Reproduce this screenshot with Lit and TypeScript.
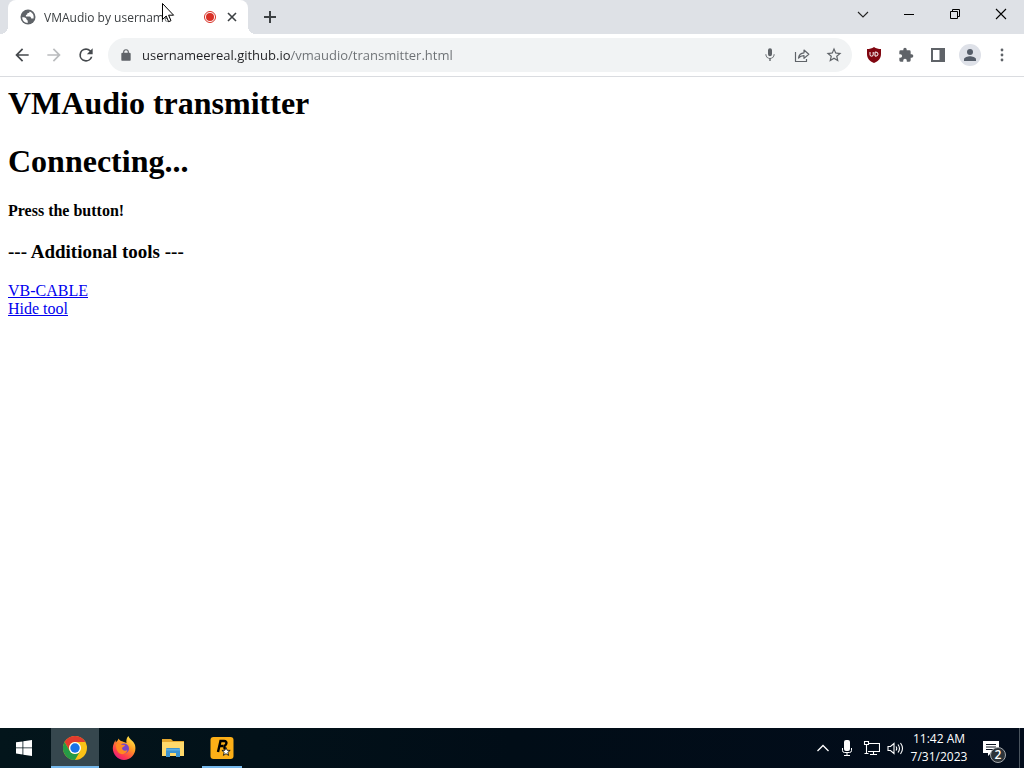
import { LitElement, html, css, svg } from "lit";
import { customElement } from "lit/decorators.js";

const icon = (body: unknown, size = 18, box = 24) =>
  html`<svg width=${size} height=${size} viewBox="0 0 ${box} ${box}" fill="currentColor" aria-hidden="true">${body}</svg>`;

const shared = css`
  * { box-sizing: border-box; }
  button {
    border: 0;
    padding: 0;
    margin: 0;
    background: none;
    color: inherit;
    font: inherit;
    display: flex;
    align-items: center;
    justify-content: center;
    flex: none;
  }
  svg { display: block; flex: none; }
`;

@customElement("tab-strip")
export class TabStrip extends LitElement {
  static styles = [shared, css`
    :host {
      display: flex;
      height: 34px;
      padding-left: 8px;
      background: #dee1e6;
      font-family: "Open Sans", "Noto Sans", sans-serif;
      font-size: 12px;
      color: #3c4043;
    }
    .tab {
      position: relative;
      display: flex;
      align-items: center;
      width: 240px;
      padding: 0 8px 0 12px;
      background: #fff;
      border-radius: 8px 8px 0 0;
    }
    .tab::before, .tab::after {
      content: "";
      position: absolute;
      bottom: 0;
      width: 8px;
      height: 8px;
    }
    .tab::before { right: 100%; background: radial-gradient(circle at 0 0, transparent 8px, #fff 8px); }
    .tab::after { left: 100%; background: radial-gradient(circle at 100% 0, transparent 8px, #fff 8px); }
    .title {
      flex: 1;
      min-width: 0;
      margin: 0 28px 0 8px;
      overflow: hidden;
      white-space: nowrap;
      mask-image: linear-gradient(90deg, #000 90%, transparent);
    }
    .close { width: 16px; height: 16px; margin-left: 7px; }
    .new { width: 28px; margin-left: 8px; }
    .controls { display: flex; margin-left: auto; color: #000; }
    .controls button { width: 46px; height: 28px; }
  `];
  render() {
    return html`
      <div class="tab">
        ${icon(svg`<circle cx="8" cy="8" r="7.500" fill="#5f6368"/><path fill="#fff" d="M2.200 8.300c1.600 0 2.600-.2 3.600.8s.6 2.100 1.900 2.300v2.600C4.500 14 2.200 11.500 2.200 8.300zM9.700 2.400c-.2 1.200-.8 1.700-2.200 1.700 0 1.300-.5 1.800-1.600 1.800v1.500h3.700c1.300.2 1.300 1.300 1.700 2h2.200c.8-2.700-.7-6-3.800-7z"/>`, 16, 16)}
        <span class="title">VMAudio by username</span>
        ${icon(svg`<circle cx="7" cy="7" r="5.500" fill="none" stroke="#d93025"/><circle cx="7" cy="7" r="4" fill="#d93025"/>`, 14, 14)}
        <button class="close" aria-label="Close tab">${icon(svg`<path d="M4 4l8 8M12 4l-8 8" stroke="#3c4043" stroke-width="1.600"/>`, 16, 16)}</button>
      </div>
      <button class="new" aria-label="New tab">${icon(svg`<path d="M7 1v12M1 7h12" stroke="#3c4043" stroke-width="2"/>`, 14, 14)}</button>
      <div class="controls">
        <button aria-label="Search tabs">${icon(svg`<path d="M1 4l5 5 5-5" fill="none" stroke="#222" stroke-width="1.100"/>`, 12, 12)}</button>
        <button aria-label="Minimize">${icon(svg`<path d="M1 6h10v1H1z"/>`, 12, 12)}</button>
        <button aria-label="Restore">${icon(svg`<path d="M1.500 3.500h7v7h-7zM3.500 3.500v-2h7v7h-2" fill="none" stroke="#000"/>`, 12, 12)}</button>
        <button aria-label="Close window">${icon(svg`<path d="M1 1l10 10M11 1L1 11" stroke="#000" stroke-width="1.100"/>`, 12, 12)}</button>
      </div>`;
  }
}

@customElement("nav-toolbar")
export class NavToolbar extends LitElement {
  static styles = [shared, css`
    :host {
      box-sizing: border-box;
      display: flex;
      align-items: center;
      height: 43px;
      padding: 0 6px;
      background: #fff;
      border-bottom: 1px solid #dadce0;
      color: #5f6368;
      font-family: "Open Sans", "Noto Sans", sans-serif;
      font-size: 13px;
    }
    button { width: 32px; height: 32px; }
    .dark { color: #45494d; }
    .off { color: #babcbe; }
    .omnibox {
      flex: 1;
      min-width: 0;
      display: flex;
      align-items: center;
      height: 34px;
      margin: 0 6px;
      padding: 0 2px;
      background: #f1f3f4;
      border-radius: 17px;
    }
    input {
      flex: 1;
      min-width: 0;
      height: 24px;
      padding: 0;
      border: 0;
      outline: 0;
      font: inherit;
      color: transparent;
      background: linear-gradient(90deg, #202124 149px, #6b6f73 149px);
      background-clip: text;
      -webkit-background-clip: text;
    }
    .profile span {
      display: flex;
      align-items: center;
      justify-content: center;
      width: 22px;
      height: 22px;
      border-radius: 11px;
      background: #dee1e8;
    }
  `];
  render() {
    return html`
      <button class="dark" aria-label="Back">${icon(svg`<path d="M20 11H7.830l5.590-5.590L12 4l-8 8 8 8 1.410-1.410L7.830 13H20z"/>`, 20)}</button>
      <button class="off" aria-label="Forward">${icon(svg`<path d="M4 11h12.170l-5.590-5.590L12 4l8 8-8 8-1.410-1.410L16.170 13H4z"/>`, 20)}</button>
      <button class="dark" aria-label="Reload">${icon(svg`<path d="M17.650 6.350A7.960 7.960 0 0 0 12 4a8 8 0 1 0 7.730 10h-2.080A6 6 0 1 1 12 6c1.660 0 3.140.69 4.220 1.780L13 11h7V4z"/>`, 20)}</button>
      <div class="omnibox">
        <button aria-label="View site information">${icon(svg`<path d="M18 8h-1V7A5 5 0 0 0 7 7v1H6a2 2 0 0 0-2 2v10a2 2 0 0 0 2 2h12a2 2 0 0 0 2-2V10a2 2 0 0 0-2-2zM9 8V7a3 3 0 0 1 6 0v1z"/>`, 14)}</button>
        <input aria-label="Address and search bar" spellcheck="false" value="usernameereal.github.io/vmaudio/transmitter.html">
        <button aria-label="Microphone">${icon(svg`<path d="M12 14a3 3 0 0 0 3-3V5a3 3 0 0 0-6 0v6a3 3 0 0 0 3 3zm5.500-3a5.500 5.500 0 0 1-11 0H5c0 3.400 2.700 6.300 6 6.700V21h2v-3.300c3.300-.4 6-3.300 6-6.700z"/>`, 16)}</button>
        <button aria-label="Share">${icon(svg`<path d="M1.500 5v9.500h11V12M4.500 11c.6-3.500 2.600-5 5.500-5.200V3l4.800 4.300L10 11.400V8.700C7.500 8.700 5.900 9.300 4.500 11z" fill="none" stroke="currentColor" stroke-width="1.200" stroke-linejoin="round"/>`, 16, 16)}</button>
        <button aria-label="Bookmark this tab">${icon(svg`<path d="M22 9.240l-7.190-.62L12 2 9.190 8.630 2 9.240l5.460 4.730L5.820 21 12 17.270 18.180 21l-1.630-7.030zM12 15.400l-3.760 2.270 1-4.280-3.320-2.880 4.380-.38L12 6.100l1.710 4.040 4.380.38-3.320 2.880 1 4.280z"/>`, 18)}</button>
      </div>
      <button aria-label="uBlock Origin">${icon(svg`<path d="M8 0c2 1.500 4.500 2 7 2v5c0 4.500-2.500 7-7 9-4.500-2-7-4.500-7-9V2c2.500 0 5-.5 7-2z" fill="#800610"/><path d="M4 5v2.700q0 1.500 1.600 1.500t1.600-1.500V5M9 5.500v3.600h1q2 0 2-2t-2-2H9z" fill="none" stroke="#fff"/>`, 16, 16)}</button>
      <button aria-label="Extensions">${icon(svg`<path d="M20.500 11H19V7a2 2 0 0 0-2-2h-4V3.500a2.500 2.500 0 0 0-5 0V5H4a2 2 0 0 0-2 2v3.800h1.500a2.700 2.700 0 0 1 0 5.400H2V20a2 2 0 0 0 2 2h3.800v-1.500a2.700 2.700 0 0 1 5.400 0V22H17a2 2 0 0 0 2-2v-4h1.500a2.500 2.500 0 0 0 0-5z"/>`, 16)}</button>
      <button aria-label="Side panel">${icon(svg`<path d="M0 0h14v14H0zM2 2v10h6.500V2z" fill-rule="evenodd"/>`, 14, 14)}</button>
      <button class="profile" aria-label="Profile"><span>${icon(svg`<circle cx="12" cy="8" r="4" fill="#545c68"/><path fill="#545c68" d="M12 13.500c-2.700 0-8 1.300-8 4V20h16v-2.500c0-2.700-5.300-4-8-4z"/>`, 18)}</span></button>
      <button aria-label="Menu">${icon(svg`<circle cx="8" cy="3" r="1.400"/><circle cx="8" cy="8" r="1.400"/><circle cx="8" cy="13" r="1.400"/>`, 16, 16)}</button>`;
  }
}

@customElement("transmitter-page")
export class TransmitterPage extends LitElement {
  static styles = css`
    :host {
      display: block;
      padding: 8px;
      background: #fff;
      color: #000;
      font-family: "Liberation Serif", serif;
      font-size: 16px;
      line-height: 18px;
    }
    h1 { margin: 0 0 21px; font-size: 32px; line-height: 37px; }
    h4 { margin: 22px 0 21px; font-size: 16px; line-height: 18px; }
    h3 { margin: 0 0 19px; font-size: 19px; line-height: 22px; }
    a { color: #0000ee; }
  `;
  render() {
    return html`
      <h1>VMAudio transmitter</h1>
      <h1>Connecting...</h1>
      <h4>Press the button!</h4>
      <h3>--- Additional tools ---</h3>
      <a href="#vb-cable">VB-CABLE</a><br>
      <a href="#hide">Hide tool</a>`;
  }
}

@customElement("task-bar")
export class TaskBar extends LitElement {
  static styles = [shared, css`
    :host {
      display: flex;
      height: 40px;
      background: linear-gradient(90deg, #03151b, #010d17 50%, #020c1b);
      color: #fff;
      font-family: "Open Sans", "Noto Sans", sans-serif;
      font-size: 12px;
    }
    button { width: 48px; }
    .apps { display: flex; gap: 1px; margin-left: 3px; }
    .apps button { position: relative; }
    .active { background: #36474e; }
    .active::after, .open::after {
      content: "";
      position: absolute;
      left: 0;
      right: 0;
      bottom: 0;
      height: 2px;
      background: #76b9ed;
    }
    .open::after { left: 4px; right: 4px; }
    .tray { display: flex; margin-left: auto; }
    .tray .small { width: 24px; }
    .tray .clock {
      flex-direction: column;
      width: 60px;
      padding-left: 4px;
      line-height: 18px;
      white-space: nowrap;
    }
    .notify { position: relative; }
    .badge {
      position: absolute;
      left: 23px;
      top: 19px;
      width: 16px;
      height: 16px;
      border: 1px solid #a5a9ad;
      border-radius: 8px;
      background: #2c3339;
      font-size: 12px;
      font-weight: 600;
      line-height: 14px;
      text-align: center;
    }
    .tray .desktop { width: 5px; margin-left: 4px; border-left: 1px solid #4a545e; }
  `];
  render() {
    return html`
      <button aria-label="Start">${icon(svg`<path d="M0 2.300l6.500-.9v6.100H0zM7.300 1.300L16 0v7.500H7.300zM0 8.300h6.500v6.200L0 13.600zM7.300 8.300H16V16l-8.700-1.300z"/>`, 16, 16)}</button>
      <div class="apps">
        <button class="active" aria-label="Google Chrome">${icon(svg`
          <circle cx="12" cy="12" r="12" fill="#fbc116"/>
          <path fill="#e33b2e" d="M1.600 6A12 12 0 0 1 22.400 6H12a6 6 0 0 0-5.200 9z"/>
          <path fill="#269a46" d="M1.600 6l5.200 9a6 6 0 0 0 10.400 0L12 24A12 12 0 0 1 1.600 6z"/>
          <circle cx="12" cy="12" r="6" fill="#fff"/><circle cx="12" cy="12" r="4.700" fill="#1a73e8"/>`, 24)}</button>
        <button aria-label="Firefox">${icon(svg`
          <defs><linearGradient id="fx" x1=".85" y1="0" x2=".2" y2="1"><stop offset="0" stop-color="#fff44f"/><stop offset=".4" stop-color="#ff9a23"/><stop offset=".75" stop-color="#ff3b4e"/><stop offset="1" stop-color="#e31587"/></linearGradient></defs>
          <path fill="url(#fx)" d="M3.500 4l.3 2.500C5 5 6 4.500 6.500 2.500c.8 1.500 2 2.500 3.500 2.800L14.500 7c-.5-3 .3-5.500 2-7 .3 3 5 4.500 6.500 9 2 8-3.500 15-11 15C4.500 24-2 15.500 2 7z"/>
          <circle cx="12" cy="12.500" r="5" fill="#7844c7"/>
          <path fill="#ff8a22" d="M4 8.500c2-1.500 4-1 5.500.2l3.500.4c0 1.500-2.200 1.700-3 3 .2 2.500 3 3.500 5.500 2-1 3.500-4.500 5-7.500 3.500S4 12.500 4 8.500z"/>`, 24)}</button>
        <button aria-label="File Explorer">${icon(svg`
          <path fill="#e5a82f" d="M1 3h9l2 2h11v3H1z"/><path fill="#ffd96b" d="M1 6h22v14H1z"/>
          <path fill="#3c93cf" d="M5 13q0-1 1-1h12q1 0 1 1v8h-4v-4H9v4H5z"/><path fill="#5dade0" d="M5 13h14v1.500H5z"/>`, 24)}</button>
        <button class="open" aria-label="Rockstar Games Launcher">${icon(svg`
          <rect x=".5" y="1" width="23" height="22" rx="3" fill="#fcaf17"/>
          <path d="M9 17l2.500-11H15q3 0 2.300 2.700-.5 2-2.800 2.300 1.500.5 1 3.500M10.500 11H14" transform="translate(-1 -1)" fill="none" stroke="#000" stroke-width="2.400"/>
          <path d="M16 11.500l1.200 2.800 3 .1-2.400 2 .8 3-2.600-1.700-2.600 1.700.8-3-2.300-2 3-.1z" fill="#fff" stroke="#000" stroke-width=".8"/>`, 24)}</button>
      </div>
      <div class="tray">
        <button class="small" aria-label="Show hidden icons">${icon(svg`<path d="M1.500 10L7 4.500l5.500 5.500" fill="none" stroke="#fff" stroke-width="1.300"/>`, 14, 14)}</button>
        <button class="small" aria-label="Microphone in use">${icon(svg`<rect x="5" y="0" width="6" height="11" rx="2"/><path d="M3.500 8v2.500q0 2 2 2h5q2 0 2-2V8M8 12v3M5 15.500h6" fill="none" stroke="#fff"/>`, 16, 16)}</button>
        <button class="small" aria-label="Network">${icon(svg`<path d="M5 3.500h11.500v8H5M10.500 11.500v3M7 14.500h7M1.500 1.500h4v3h-4zM3.500 4.500v9M1.500 13.500h4" fill="none" stroke="#fff" stroke-width="1.100"/>`, 17, 17)}</button>
        <button class="small" aria-label="Volume">${icon(svg`<path d="M1 6.500h2.500L7 3.500v10l-3.500-3H1zM9 6.500q1.500 2 0 4M11 4.500q3 4 0 8M13.500 3q4 5.500 0 11" fill="none" stroke="#fff" stroke-width="1.100"/>`, 17, 17)}</button>
        <button class="clock"><span>11:42 AM</span><span>7/31/2023</span></button>
        <button class="notify" aria-label="2 notifications">
          ${icon(svg`<path d="M0 1h16v12H8l-3 3v-3H0z"/><path d="M3 4.500h10M3 7h10M3 9.500h10" stroke="#0b1420"/>`, 16, 16)}
          <span class="badge">2</span>
        </button>
        <button class="desktop" aria-label="Show desktop"></button>
      </div>`;
  }
}

@customElement("app-root")
export class AppRoot extends LitElement {
  static styles = css`
    :host {
      position: relative;
      display: flex;
      flex-direction: column;
      min-height: 100vh;
      background: #fff;
    }
    transmitter-page { flex: 1; }
    .pointer { position: absolute; left: 162px; top: 3px; }
  `;
  render() {
    return html`
      <tab-strip></tab-strip>
      <nav-toolbar></nav-toolbar>
      <transmitter-page></transmitter-page>
      <task-bar></task-bar>
      <svg class="pointer" width="13" height="20" viewBox="0 0 13 20" aria-hidden="true">
        <path d="M.5.500v16l3.700-3.500 2.400 5.700 2.400-1-2.400-5.500h5z" fill="#fff" stroke="#000"/>
      </svg>`;
  }
}
